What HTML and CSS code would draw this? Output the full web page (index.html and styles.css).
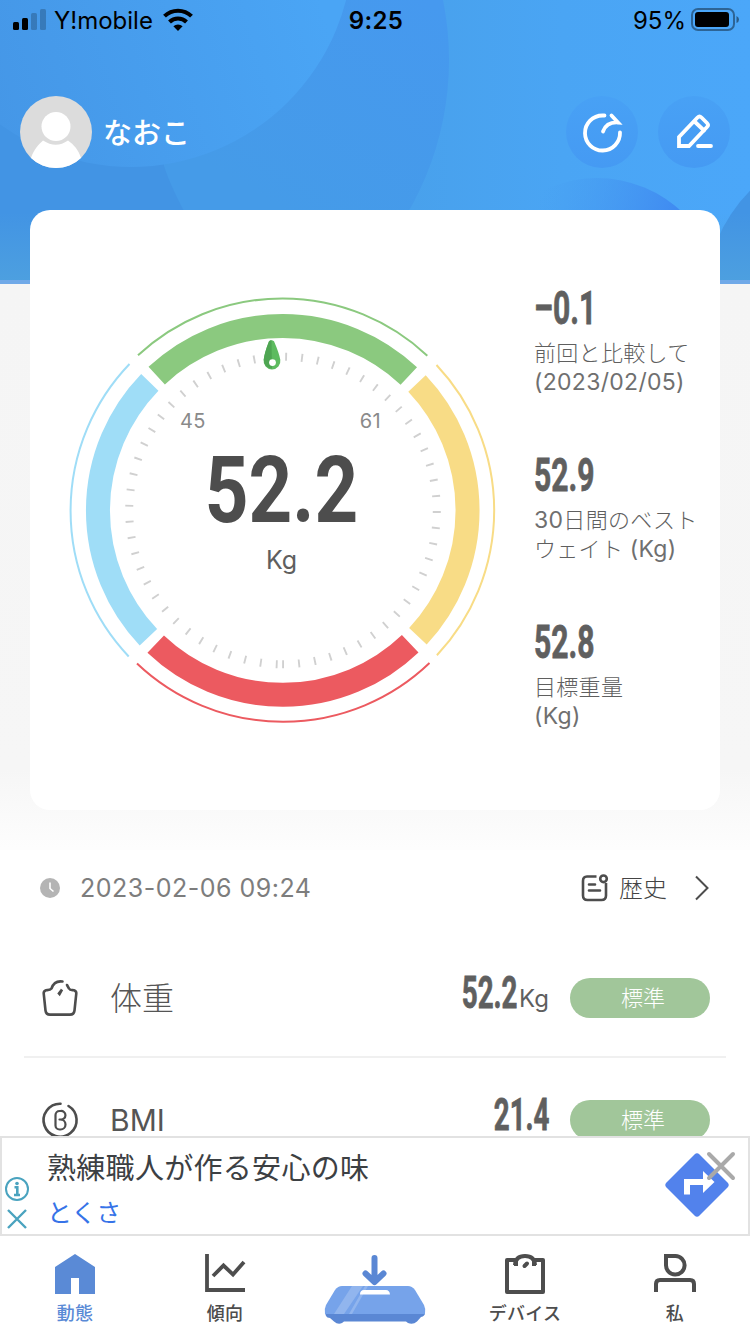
FILE: index.html
```html
<!DOCTYPE html>
<html lang="ja">
<head>
    <meta charset="UTF-8">
    <meta name="viewport" content="width=device-width, initial-scale=1.0">
    <title>動態</title>
    <link rel="stylesheet" href="styles.css">
</head>
<body>
    <header class="header">
        <svg class="header-bg" viewBox="0 0 750 284" preserveAspectRatio="none">
            <defs>
                <linearGradient id="sky" x1="0" y1="0" x2="1" y2="0">
                    <stop offset="0.5" stop-color="#48a0ea"/>
                    <stop offset="0.75" stop-color="#4aa5f4"/>
                    <stop offset="1" stop-color="#4ba7f9"/>
                </linearGradient>
                <linearGradient id="mid" gradientUnits="userSpaceOnUse" x1="300" y1="220" x2="430" y2="0">
                    <stop offset="0" stop-color="#459be8"/>
                    <stop offset="1" stop-color="#4699ef"/>
                </linearGradient>
                <linearGradient id="light" gradientUnits="userSpaceOnUse" x1="0" y1="130" x2="330" y2="30">
                    <stop offset="0" stop-color="#4597e7"/>
                    <stop offset="1" stop-color="#4aa5f5"/>
                </linearGradient>
                <linearGradient id="dot" gradientUnits="userSpaceOnUse" x1="545" y1="180" x2="685" y2="225">
                    <stop offset="0" stop-color="#4598ee" stop-opacity="0"/>
                    <stop offset="1" stop-color="#3e87f1"/>
                </linearGradient>
                <linearGradient id="fade" x1="0" y1="0" x2="0" y2="1">
                    <stop offset="0.75" stop-color="#50a3de" stop-opacity="0"/>
                    <stop offset="1" stop-color="#50a3de" stop-opacity="0.8"/>
                </linearGradient>
            </defs>
            <rect width="750" height="284" fill="url(#sky)"/>
            <circle cx="145" cy="60" r="304" fill="url(#mid)"/>
            <path d="M0 0H150L164 166Q171 188 190 222V284H0Z" fill="#4294e4"/>
            <circle cx="131" cy="-55" r="222" fill="url(#light)"/>
            <circle cx="597" cy="302" r="124" fill="url(#dot)"/>
            <circle cx="860" cy="300" r="155" fill="#4294e4"/>
            <rect width="750" height="284" fill="url(#fade)"/>
            <rect y="280" width="750" height="4" fill="#70a9e8"/>
        </svg>

        <div class="status-bar">
            <div class="status-left">
                <svg width="34" height="22" viewBox="0 0 34 22">
                    <rect x="0" y="13" width="6" height="8" rx="1.5"/>
                    <rect x="9" y="9" width="6" height="12" rx="1.5"/>
                    <g opacity="0.2"><rect x="18" y="4" width="6" height="17" rx="1.5"/><rect x="27" y="0" width="6" height="21" rx="1.5"/></g>
                </svg>
                <span class="carrier">Y!mobile</span>
                <svg width="30" height="22" viewBox="0 0 30 22" fill="none" stroke="#000" stroke-width="4">
                    <path d="M1.500 7.200a19.200 19.200 0 0 1 27 0"/>
                    <path d="M6.500 13a12 12 0 0 1 17 0"/>
                    <path d="M15 22l-4.600-4.700a6.500 6.500 0 0 1 9.200 0z" fill="#000" stroke="none"/>
                </svg>
            </div>
            <span class="clock">9:25</span>
            <div class="status-right">
                <span class="percent">95%</span>
                <svg width="48" height="24" viewBox="0 0 48 24">
                    <rect x="1" y="1" width="42" height="21" rx="6" fill="none" stroke="#000" stroke-opacity="0.4" stroke-width="2"/>
                    <rect x="4" y="4" width="34" height="15" rx="3"/>
                    <path d="M45.500 8q2.500 1 2.500 3.500t-2.500 3.500z" opacity="0.45"/>
                </svg>
            </div>
        </div>

        <div class="user-bar">
            <svg class="avatar" viewBox="0 0 72 72">
                <circle cx="36" cy="36" r="36" fill="#dcdcdc"/>
                <path d="M11 62C14 53 19 48 23 44.500Q36 53 48 44.500C54 49 58 53 61 62A36 36 0 0 1 11 62Z" fill="#fff"/>
                <circle cx="36" cy="30.500" r="14.500" fill="#fff"/>
            </svg>
            <span class="user-name">なおこ</span>
            <button class="round-btn" aria-label="共有">
                <svg width="40" height="40" viewBox="0 0 40 40">
                    <path d="M22.500 3.500H20.500A17.500 17.500 0 1 0 38 20.500"/>
                    <path d="M21 19.500C23 14 28 10 36 10.500L29.500 3.500"/>
                </svg>
            </button>
            <button class="round-btn" aria-label="編集">
                <svg width="36" height="36" viewBox="0 0 36 36">
                    <path d="M3 32V23L21.500 3.500Q23.500 1.500 25.500 3.500L31 9Q33 11 31 13L13 32Z"/>
                    <path d="M18.500 7.500L28 16.500"/>
                    <path d="M22 32H35"/>
                </svg>
            </button>
        </div>
    </header>

    <main class="content">
        <section class="summary">
            <div class="card">
                <div class="gauge">
                    <svg class="gauge-dial" viewBox="0 0 426 426">
                        <!-- 外側の細い線 -->
                        <g fill="none" stroke-width="2">
                            <path class="arc-normal" d="M68 58.300A212 212 0 0 1 357.300 58.700"/>
                            <path class="arc-over" d="M366.500 68A212 212 0 0 1 366.900 358.300"/>
                            <path class="arc-danger" d="M359.500 366A212 212 0 0 1 67 366.500"/>
                            <path class="arc-under" d="M58.700 359.500A212 212 0 0 1 59.500 67"/>
                        </g>
                        <!-- 太いリング -->
                        <g fill="none" stroke-width="24">
                            <path class="arc-normal" d="M86.700 78.600A184.500 184.500 0 0 1 338.800 79"/>
                            <path class="arc-over" d="M347 86.500A184.500 184.500 0 0 1 347.900 339.300"/>
                            <path class="arc-danger" d="M340.200 346.700A184.500 184.500 0 0 1 85.700 347.100"/>
                            <path class="arc-under" d="M78.400 340.300A184.500 184.500 0 0 1 79.800 85.300"/>
                        </g>
                        <circle cx="213" cy="213.500" r="153.800" fill="none" stroke="#d0d0d0" stroke-width="8" pathLength="360" stroke-dasharray="0.7 5.26" transform="rotate(92 213 213.500)"/>
                        <!-- 針 -->
                        <g transform="translate(-0.500 0.800)">
                            <path d="M199.500 43.500Q202 41.500 204.500 43.500Q209.500 55 210.800 62A8.400 8.400 0 1 1 194.200 62Q195 55 199.500 43.500Z" fill="#5dbb5f"/>
                            <path d="M199.500 43.500Q201 42 202 42.500L202.500 71Q194.500 70 194.200 62Q195 55 199.500 43.500Z" fill="#4ea552"/>
                            <circle cx="203" cy="64.800" r="3.400" fill="#fff"/>
                        </g>
                    </svg>
                    <div class="gauge-text">
                        <div class="gauge-range"><span>45</span><span>61</span></div>
                        <div class="gauge-value"><span class="din">52.2</span></div>
                        <div class="gauge-unit">Kg</div>
                    </div>
                </div>
                <div class="stats">
                    <div class="stat">
                        <div class="stat-value din">–0.1</div>
                        <div class="stat-label">前回と比較して<br><span class="latin">(2023/02/05)</span></div>
                    </div>
                    <div class="stat">
                        <div class="stat-value din">52.9</div>
                        <div class="stat-label"><span class="latin">30</span>日間のベスト<br>ウェイト <span class="latin">(Kg)</span></div>
                    </div>
                    <div class="stat">
                        <div class="stat-value din">52.8</div>
                        <div class="stat-label">目標重量<br><span class="latin">(Kg)</span></div>
                    </div>
                </div>
            </div>
        </section>

        <section class="records">
            <div class="record-head">
                <svg width="20" height="20" viewBox="0 0 20 20">
                    <circle cx="10" cy="10" r="10" fill="#b4b4b4"/>
                    <path d="M10 4.500V10.500L13.500 13.500" fill="none" stroke="#fff" stroke-width="1.600"/>
                </svg>
                <span class="record-time">2023-02-06 09:24</span>
                <svg class="history-icon" width="28" height="28" viewBox="0 0 28 28">
                    <path d="M15.500 2.500H6Q2 2.500 2 7V21.500Q2 26 6.500 26H20.500Q25 26 25 21.500V9"/>
                    <circle cx="22.500" cy="4.800" r="3.300"/>
                    <path d="M8 10.500H14M8 16.500H19" stroke-linecap="round"/>
                </svg>
                <span class="history">歴史</span>
                <svg class="chevron" width="14" height="26" viewBox="0 0 14 26">
                    <path d="M1 1.500L12.500 13L1 24.500"/>
                </svg>
            </div>

            <div class="row">
                <svg class="row-icon" viewBox="0 0 36 36">
                    <path d="M20.500 1.500C14 .5 11 4 9.500 8.500C8 10.500 5.500 10 4 10.200Q1.500 11 1.700 13.500L3.500 30.500Q4 34.600 8 34.600H28Q32 34.600 32.500 30.500L34.300 13.500Q34.500 11 32 10.200C29.500 10 28 10.500 27 8.500L25 5"/>
                    <path d="M20 9.500L17 13.500L17.500 14Z"/>
                </svg>
                <span class="row-name">体重</span>
                <span class="row-value din">52.2</span><span class="row-unit">Kg</span>
                <span class="badge">標準</span>
            </div>
            <div class="row">
                <svg class="row-icon" viewBox="0 0 36 36">
                    <path d="M18.500 1.700A16.500 16.500 0 1 0 26.500 4"/>
                    <path d="M17.500 17.500H18.500A4.300 4.300 0 1 0 18.500 9H17.500A4 4 0 0 0 13.500 13V23.500A4 4 0 0 0 17.500 27.500H18.500A5 5 0 0 0 18.500 17.500" stroke-width="2.200"/>
                </svg>
                <span class="row-name latin">BMI</span>
                <span class="row-value din">21.4</span>
                <span class="badge">標準</span>
            </div>
        </section>
    </main>

    <aside class="ad">
        <div class="ad-marks">
            <svg width="24" height="24" viewBox="0 0 24 24" fill="none" stroke="#4aa3bf" stroke-width="2">
                <circle cx="12" cy="12" r="11"/>
                <path d="M9.500 10.200H12.300V18M9 18H15" stroke-width="2.600"/>
                <circle cx="12" cy="6.500" r="1.800" fill="#4aa3bf" stroke="none"/>
            </svg>
            <svg width="20" height="20" viewBox="0 0 20 20" fill="none" stroke="#4aa3bf" stroke-width="2.400">
                <path d="M1 1L19 19M19 1L1 19"/>
            </svg>
        </div>
        <div class="ad-text">
            <div class="ad-title">熟練職人が作る安心の味</div>
            <div class="ad-link">とくさ</div>
        </div>
        <div class="ad-sign">
            <svg width="64" height="64" viewBox="0 0 64 64">
                <path d="M29.500 1.500Q32 -1 34.500 1.500L62.500 29.500Q65 32 62.500 34.500L34.500 62.500Q32 65 29.500 62.500L1.500 34.500Q-1 32 1.500 29.500Z" fill="#5282ec"/>
                <path d="M22 41.500V29H38" fill="none" stroke="#fff" stroke-width="6"/>
                <path d="M38 18L49.500 29L38 40Z" fill="#fff"/>
            </svg>
            <svg class="ad-close" width="30" height="30" viewBox="0 0 30 30">
                <path d="M3 3L27 27M27 3L3 27" stroke="#a9a9a9" stroke-width="4" stroke-linecap="round"/>
            </svg>
        </div>
    </aside>

    <nav class="tabs">
        <a class="tab active">
            <svg width="40" height="40" viewBox="0 0 40 40">
                <path d="M20 0L40 13V40H24V24H16V40H0V13Z" fill="#5a8ad6"/>
            </svg>
            <span>動態</span>
        </a>
        <a class="tab">
            <svg width="40" height="40" viewBox="0 0 40 40" fill="none" stroke="#4d4d4d" stroke-width="3.800">
                <path d="M2 0V36H40"/>
                <path d="M8 22L18.500 11.500L28 20.500L39 8"/>
            </svg>
            <span>傾向</span>
        </a>
        <a class="tab">
            <svg width="102" height="70" viewBox="0 0 102 70">
                <path d="M1 59L2 62Q3 64 6 64L10 67.500Q14 71 18 69L20 67.500H82L84 69Q89 71 93 67.500L97 63Q101 62 101 59Z" fill="#5a87d4"/>
                <path d="M18 32H84Q88 32 91 36L100 51Q102 55 101 60H1Q0 55 2 51L11 36Q14 32 18 32Z" fill="#76a3ea"/>
                <path d="M28 32H39L20 60H10ZM41 32H44L28 60H25Z" fill="#91b5ee"/>
                <path d="M36 40.500Q36 36 40 36H62Q65.500 36 66 40.500Z" fill="#fff"/>
                <path d="M50.500 4V24M41.500 19.500L50.500 28L59.500 19.500" fill="none" stroke="#5a87d4" stroke-width="6" stroke-linecap="round" stroke-linejoin="round"/>
            </svg>
        </a>
        <a class="tab">
            <svg width="40" height="40" viewBox="0 0 40 40" fill="none" stroke="#4d4d4d" stroke-width="4">
                <path d="M11 12V6H2V38H38V6H29V12" stroke-linejoin="round"/>
                <path d="M10 11Q10.500 2 20 2T30 11"/>
                <path d="M19.500 12L22 9.500" stroke-linecap="round"/>
            </svg>
            <span>デバイス</span>
        </a>
        <a class="tab">
            <svg width="42" height="40" viewBox="0 0 42 40" fill="none" stroke="#4d4d4d" stroke-width="4">
                <path d="M12 2H21.500A9.300 9.300 0 1 1 12 11Z"/>
                <path d="M2 38V30Q2 26 6 26H36Q40 26 40 30V38"/>
            </svg>
            <span>私</span>
        </a>
    </nav>
</body>
</html>
```

FILE: styles.css
```css
* {
    box-sizing: border-box;
}
body {
    margin: 0;
    width: 750px;
    height: 1334px;
    overflow: hidden;
    display: flex;
    flex-direction: column;
    background: #fff;
    font-family: Inter, "Noto Sans CJK JP", sans-serif;
    color: #5f5f5f;
}
svg {
    display: block;
    flex-shrink: 0;
    overflow: visible;
}
.din {
    font-family: Roboto, "Liberation Sans", sans-serif;
    font-weight: 700;
}

/* ヘッダー */
.header {
    position: relative;
    height: 284px;
    flex-shrink: 0;
}
.header-bg {
    position: absolute;
    inset: 0;
    width: 100%;
    height: 100%;
    z-index: -1;
    overflow: hidden;
}
.status-bar {
    display: grid;
    grid-template-columns: 1fr auto 1fr;
    align-items: center;
    height: 40px;
    padding: 0 11px 0 13px;
    color: #000;
    font-size: 24px;
}
.status-left,
.status-right {
    display: flex;
    align-items: center;
}
.status-right {
    justify-content: flex-end;
    gap: 5px;
}
.carrier {
    margin: 0 10px 0 7px;
}
.clock {
    font-weight: 600;
    letter-spacing: 0.3px;
}
.user-bar {
    display: flex;
    align-items: center;
    padding: 56px 20px 0;
}
.avatar {
    width: 72px;
    height: 72px;
}
.user-name {
    flex: 1;
    margin: -3px 0 0 11px;
    color: #fff;
    font-size: 29px;
    font-weight: 500;
}
.round-btn {
    display: flex;
    align-items: center;
    justify-content: center;
    width: 72px;
    height: 72px;
    margin-left: 20px;
    padding: 0;
    border: 0;
    border-radius: 50%;
    background: linear-gradient(#48a1f5, #459af3);
}
.round-btn svg {
    fill: none;
    stroke: #fff;
    stroke-width: 3.8;
    stroke-linecap: round;
}

/* 体重カード */
.content {
    flex: 1;
    min-height: 0;
}
.summary {
    height: 640px;
    margin-top: -74px;
    padding: 0 30px;
    background: linear-gradient(transparent 74px, #f5f5f5 74px, #f6f6f6 560px, #fdfdfd 638px);
}
.card {
    display: flex;
    height: 600px;
    border-radius: 20px;
    background: #fff;
}
.gauge {
    position: relative;
    width: 426px;
    height: 426px;
    margin: 87px 0 0 40px;
}
.gauge-dial {
    position: absolute;
    inset: 0;
    width: 426px;
}
.arc-normal { stroke: #8bc97f; }
.arc-over { stroke: #f8dc86; }
.arc-danger { stroke: #ec5a60; }
.arc-under { stroke: #9fddf7; }
.gauge-text {
    padding: 112px 113px 0 110px;
    text-align: center;
}
.gauge-range {
    display: flex;
    justify-content: space-between;
    padding-right: 2px;
    font-size: 20px;
    line-height: 24px;
    letter-spacing: 0.3px;
    color: #8a8a8a;
}
.gauge-value {
    display: flex;
    justify-content: center;
    font-size: 93px;
    line-height: 108px;
    margin-top: 4px;
    color: #4d4d4d;
}
.gauge-value .din {
    transform: scaleX(0.82);
}
.gauge-unit {
    font-size: 25px;
    line-height: 30px;
}
.stats {
    margin-left: 38px;
    padding-top: 74px;
}
.stat {
    height: 167px;
}
.stat-value {
    font-size: 47px;
    line-height: 48px;
    transform: scaleX(0.64);
    transform-origin: left;
    -webkit-text-stroke: 0.8px #5f5f5f;
}
.stat-label {
    margin-top: 7px;
    font-size: 22px;
    font-weight: 300;
    line-height: 29px;
    letter-spacing: 0.3px;
    white-space: nowrap;
    color: #5f5f5f;
}
.stat-label .latin {
    font-size: 23px;
    letter-spacing: 0.3px;
    color: #6f6f6f;
}
.latin {
    font-weight: 400;
}

/* 測定記録 */
.record-head {
    display: flex;
    align-items: center;
    height: 76px;
    padding: 0 41px 0 40px;
}
.record-time {
    flex: 1;
    margin-left: 20px;
    font-size: 25px;
    letter-spacing: 0.5px;
    color: #7d7d7d;
}
.history-icon,
.chevron {
    fill: none;
    stroke: #4d4d4d;
    stroke-width: 2.6;
}
.chevron {
    margin-left: 28px;
    stroke-width: 2;
}
.history {
    margin: -4px 0 0 10px;
    font-size: 24px;
    font-weight: 300;
    color: #444;
}
.row {
    display: flex;
    align-items: center;
    height: 122px;
    margin: 10px 24px 0;
    padding: 4px 16px 0 18px;
    border-bottom: 2px solid #f0f0f0;
}
.row + .row {
    margin-top: 0;
}
.row-icon {
    width: 36px;
    height: 36px;
    fill: none;
    stroke: #4d4d4d;
    stroke-width: 2.6;
    stroke-linecap: round;
}
.row-name {
    flex: 1;
    margin: -4px 0 0 32px;
    font-size: 32px;
    font-weight: 300;
    color: #555;
}
.row-name.latin {
    margin-top: 0;
    font-size: 30px;
    font-weight: 400;
}
.row-value {
    margin-top: -10px;
    font-size: 44px;
    transform: scaleX(0.63);
    transform-origin: right;
    -webkit-text-stroke: 0.8px #5f5f5f;
}
.row-unit {
    margin-left: 2px;
    font-size: 24px;
}
.badge {
    width: 140px;
    height: 40px;
    margin-left: 21px;
    padding-left: 6px;
    border-radius: 20px;
    background: #a1c69a;
    color: #fff;
    font-size: 22px;
    font-weight: 300;
    line-height: 41px;
    text-align: center;
}

/* 広告 */
.ad {
    position: relative;
    display: flex;
    flex-shrink: 0;
    height: 100px;
    border: 2px solid #e2e2e2;
    background: #fff;
}
.ad-marks {
    display: flex;
    flex-direction: column;
    align-items: center;
    gap: 8px;
    padding: 39px 0 0 3px;
}
.ad-text {
    flex: 1;
    margin-left: 18px;
}
.ad-title {
    font-size: 29px;
    line-height: 40px;
    letter-spacing: 0.3px;
    margin-top: 11px;
    color: #3c4043;
}
.ad-link {
    margin-top: 6px;
    font-size: 25px;
    line-height: 36px;
    color: #3673e8;
}
.ad-sign {
    position: relative;
    margin: 15px 19px 0 0;
}
.ad-close {
    position: absolute;
    top: -2px;
    right: -7px;
}

/* 下部タブ */
.tabs {
    display: grid;
    grid-template-columns: repeat(5, 1fr);
    flex-shrink: 0;
    height: 98px;
    background: #fff;
}
.tab {
    display: flex;
    flex-direction: column;
    align-items: center;
    padding-top: 18px;
    font-size: 18px;
    font-weight: 500;
    line-height: 26px;
    color: #4d4d4d;
}
.tab span {
    margin-top: 7px;
    letter-spacing: 0.3px;
}
.tab.active {
    color: #5a8ad6;
}
```
